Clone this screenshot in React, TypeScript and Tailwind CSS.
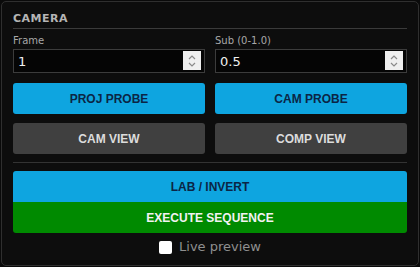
import React, { useState } from 'react';

function Spinner() {
  return (
    <span className="pointer-events-none absolute right-[4px] top-[2px] flex h-[19px] w-[18px] flex-col items-center justify-center bg-[#efefef]">
      <svg width="8" height="14" viewBox="0 0 8 14" fill="none" stroke="#8a8a8a" strokeWidth="1.2">
        <path d="M1 5 L4 2 L7 5" />
        <path d="M1 9 L4 12 L7 9" />
      </svg>
    </span>
  );
}

function NumberField({ label, value, onChange }: { label: string; value: string; onChange: (v: string) => void }) {
  return (
    <label className="flex flex-col">
      <span className="text-[10px] leading-[12px] text-[#a8a8a8]">{label}</span>
      <span className="relative mt-[2px] block">
        <input
          type="text"
          inputMode="decimal"
          value={value}
          onChange={e => onChange(e.target.value)}
          className="block h-[24px] w-full border border-[#3c3c3c] bg-[#050505] px-[4px] text-[13px] text-[#f0f0f0] outline-none"
        />
        <Spinner />
      </span>
    </label>
  );
}

export default function App() {
  const [frame, setFrame] = useState('1');
  const [sub, setSub] = useState('0.5');
  const [live, setLive] = useState(false);

  return (
    <div className="w-[420px] h-[267px] bg-[#0a0a0a] p-[1px] font-['DejaVu_Sans',sans-serif]">
      <div className="h-full rounded-[5px] border border-[#2f2f2f] bg-[#0d0d0d] px-[11px] pt-[11px]">
        {/* Header */}
        <div className="border-b border-[#3a3a3a] pb-[3px] text-[11px] font-bold tracking-[0.5px] text-[#b5b5b5] leading-[12px]">
          CAMERA
        </div>

        {/* Inputs */}
        <div className="mt-[6px] grid grid-cols-2 gap-[10px]">
          <NumberField label="Frame" value={frame} onChange={setFrame} />
          <NumberField label="Sub (0-1.0)" value={sub} onChange={setSub} />
        </div>

        {/* Probe / view buttons */}
        <div className="mt-[10px] grid grid-cols-2 gap-x-[10px] gap-y-[9px] font-['Liberation_Sans',sans-serif] text-[12px] font-bold">
          <button className="h-[31px] rounded-[3px] bg-[#0ea5e0] text-[#0b2545]">PROJ PROBE</button>
          <button className="h-[31px] rounded-[3px] bg-[#0ea5e0] text-[#0b2545]">CAM PROBE</button>
          <button className="h-[31px] rounded-[3px] bg-[#404040] text-[#dcdcdc]">CAM VIEW</button>
          <button className="h-[31px] rounded-[3px] bg-[#404040] text-[#dcdcdc]">COMP VIEW</button>
        </div>

        <div className="mt-[8px] border-t border-[#333]" />

        {/* Main actions */}
        <div className="mt-[8px] flex flex-col font-['Liberation_Sans',sans-serif] text-[12px] font-bold">
          <button className="h-[31px] rounded-t-[3px] bg-[#0ea5e0] text-[#0b2545]">LAB / INVERT</button>
          <button className="h-[31px] rounded-b-[3px] bg-[#008a00] text-[#f2f2f2]">EXECUTE SEQUENCE</button>
        </div>

        <label className="mt-[6px] flex items-center justify-center gap-[7px] text-[13px] leading-[16px] text-[#8f8f8f]">
          <input
            type="checkbox"
            checked={live}
            onChange={e => setLive(e.target.checked)}
            className="h-[13px] w-[13px] appearance-none rounded-[2px] bg-white checked:bg-[#0ea5e0]"
          />
          Live preview
        </label>
      </div>
    </div>
  );
}
